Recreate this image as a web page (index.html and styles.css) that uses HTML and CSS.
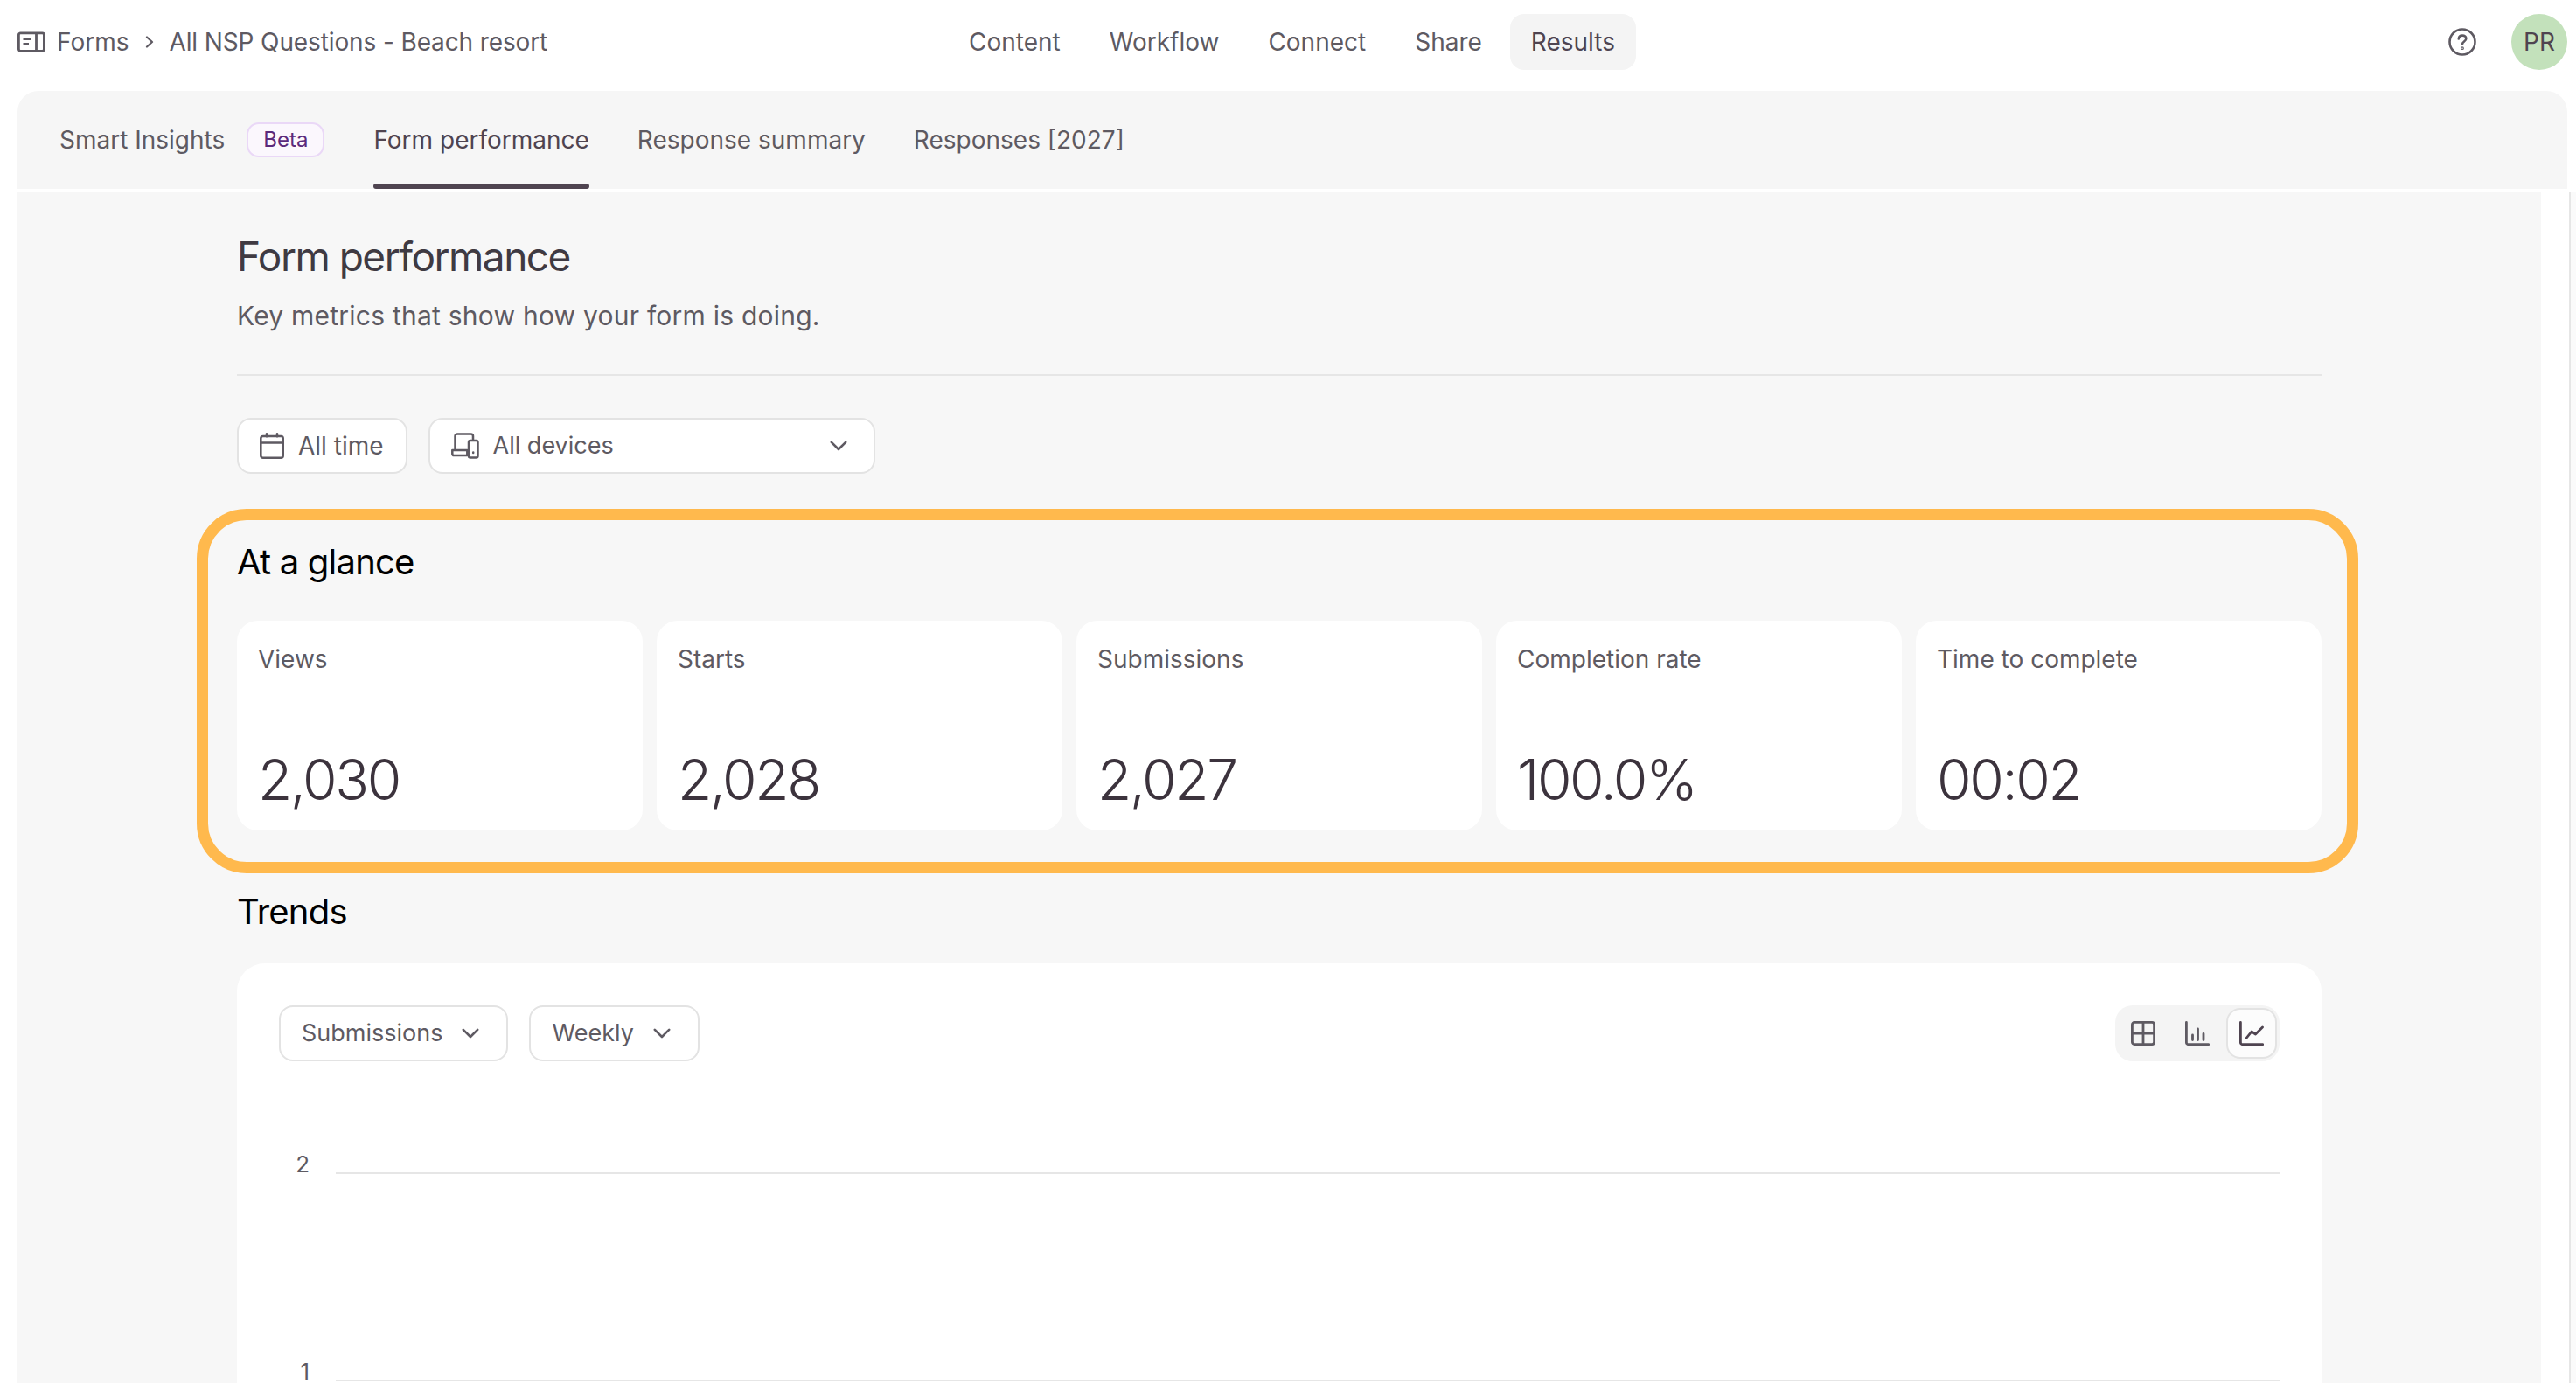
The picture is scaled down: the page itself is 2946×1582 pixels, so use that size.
FILE: index.html
```html
<!DOCTYPE html>
<html lang="en">
<head>
<meta charset="utf-8">
<title>Form performance</title>
<link rel="stylesheet" href="styles.css">
</head>
<body>
<header class="topbar">
  <div class="crumbs">
    <svg class="crumb-icon" width="32" height="24" viewBox="0 0 32 24" fill="none" stroke="currentColor" stroke-width="2.8"><rect x="1.400" y="1.800" width="29" height="20.500" rx="2"/><path d="M21.500 2v20M6.500 8.500h9.500M6.500 14.500h6.500"/></svg>
    <span>Forms</span>
    <svg class="crumb-sep" width="10" height="14" viewBox="0 0 10 14" fill="none" stroke="currentColor" stroke-width="2.200" stroke-linecap="round" stroke-linejoin="round"><path d="M2 1.500 8 7l-6 5.500"/></svg>
    <span class="crumb-title">All NSP Questions - Beach resort</span>
  </div>
  <nav class="mainnav">
    <a class="navitem">Content</a>
    <a class="navitem">Workflow</a>
    <a class="navitem">Connect</a>
    <a class="navitem">Share</a>
    <a class="navitem navitem-active">Results</a>
  </nav>
  <div class="account">
    <svg width="32" height="32" viewBox="0 0 32 32" fill="none" stroke="currentColor" stroke-width="2.600" stroke-linecap="round"><circle cx="16" cy="16" r="14.500"/><path d="M11.800 12.500c.2-2.400 2-3.900 4.300-3.900 2.400 0 4.200 1.500 4.200 3.600 0 3.200-4.300 3.300-4.300 6.200"/><circle cx="16" cy="23.200" r=".6"/></svg>
    <div class="avatar">PR</div>
  </div>
</header>

<div class="tabbar">
  <a class="tab">Smart Insights<span class="beta">Beta</span></a>
  <a class="tab tab-active">Form performance</a>
  <a class="tab">Response summary</a>
  <a class="tab">Responses [2027]</a>
</div>

<div class="shell">
  <main class="panel">
    <div class="inner">
      <h1 class="title">Form performance</h1>
      <p class="subtitle">Key metrics that show how your form is doing.</p>
      <hr class="divider">
      <div class="filters">
        <button class="control control-time">
          <svg width="28" height="30" viewBox="0 0 28 30" fill="none" stroke="currentColor" stroke-width="2.600" stroke-linecap="round"><rect x="1.300" y="4" width="25.400" height="24.700" rx="2.500"/><path d="M1.300 11.500h25.400M8 1.300v3M20 1.300v3"/></svg>
          All time
        </button>
        <button class="control control-wide">
          <svg width="32" height="30" viewBox="0 0 32 30" fill="none" stroke="currentColor" stroke-width="2.500" stroke-linecap="round" stroke-linejoin="round"><path d="M4.500 20V4a2.500 2.500 0 0 1 2.500-2.500h15.500A2.500 2.500 0 0 1 25 4v4M1.300 20h17v6H3a1.700 1.700 0 0 1-1.700-1.700z"/><rect x="20" y="9" width="10.500" height="19.500" rx="2"/><path d="M25.200 22.500v.5"/></svg>
          <span class="control-label">All devices</span>
          <svg width="20" height="12" viewBox="0 0 20 12" fill="none" stroke="currentColor" stroke-width="2.600" stroke-linecap="round" stroke-linejoin="round"><path d="m1.800 1.800 8.200 8.200 8.200-8.200"/></svg>
        </button>
      </div>

      <section class="glance">
        <div class="highlight"></div>
        <h2 class="heading">At a glance</h2>
        <div class="stats">
          <div class="stat"><div class="stat-label">Views</div><div class="stat-value">2,030</div></div>
          <div class="stat"><div class="stat-label">Starts</div><div class="stat-value">2,028</div></div>
          <div class="stat"><div class="stat-label">Submissions</div><div class="stat-value">2,027</div></div>
          <div class="stat"><div class="stat-label">Completion rate</div><div class="stat-value">100.0%</div></div>
          <div class="stat"><div class="stat-label">Time to complete</div><div class="stat-value">00:02</div></div>
        </div>
      </section>

      <h2 class="heading heading-trends">Trends</h2>
      <section class="chart-card">
        <div class="chart-tools">
          <button class="control control-drop">Submissions
            <svg width="20" height="12" viewBox="0 0 20 12" fill="none" stroke="currentColor" stroke-width="2.600" stroke-linecap="round" stroke-linejoin="round"><path d="m1.800 1.800 8.200 8.200 8.200-8.200"/></svg>
          </button>
          <button class="control control-drop">Weekly
            <svg width="20" height="12" viewBox="0 0 20 12" fill="none" stroke="currentColor" stroke-width="2.600" stroke-linecap="round" stroke-linejoin="round"><path d="m1.800 1.800 8.200 8.200 8.200-8.200"/></svg>
          </button>
          <div class="views">
            <span class="view">
              <svg width="28" height="28" viewBox="0 0 28 28" fill="none" stroke="currentColor" stroke-width="2.800" stroke-linejoin="round"><rect x="1.400" y="1.400" width="25.200" height="25.200" rx="2.500"/><path d="M14 1.400v25.200M1.400 14h25.200"/></svg>
            </span>
            <span class="view">
              <svg width="28" height="28" viewBox="0 0 28 28" fill="none" stroke="currentColor" stroke-width="2.800" stroke-linecap="round" stroke-linejoin="round"><path d="M1.400 1.400v23a2.300 2.300 0 0 0 2.300 2.300h23M8.500 16v5.500M14.500 9v12.500M21 14.500v7"/></svg>
            </span>
            <span class="view view-active">
              <svg width="28" height="28" viewBox="0 0 28 28" fill="none" stroke="currentColor" stroke-width="2.800" stroke-linecap="round" stroke-linejoin="round"><path d="M1.400 1.400v23a2.300 2.300 0 0 0 2.300 2.300h23M8 19.500l6-7.500 4.500 3 8-8"/></svg>
            </span>
          </div>
        </div>
        <div class="plot">
          <div class="plot-row"><span class="tick">2</span><span class="gridline"></span></div>
          <div class="plot-row"><span class="tick">1</span><span class="gridline"></span></div>
        </div>
      </section>
    </div>
  </main>
  <div class="scrolltrack"></div>
</div>
</body>
</html>
```

FILE: styles.css
```css
* { box-sizing: border-box; }
html, body { margin: 0; height: 100%; }
body {
  width: 2946px;
  height: 1582px;
  overflow: hidden;
  background: #fff;
  color: #5e5a62;
  font-family: Inter, "Noto Sans", sans-serif;
  font-size: 28px;
  line-height: 40px;
  display: flex;
  flex-direction: column;
}
.topbar {
  height: 104px;
  flex: none;
  display: grid;
  grid-template-columns: 1fr auto 1fr;
  align-items: start;
  padding: 16px 10px 0 20px;
}
.crumbs { display: flex; align-items: center; height: 64px; }
.crumb-icon { margin-right: 13px; }
.crumb-sep { margin: 0 18px; }
.crumb-title { letter-spacing: -.12px; }
.mainnav { display: flex; gap: 8px; margin-left: -1px; }
.navitem { height: 64px; padding: 0 24px; display: flex; align-items: center; border-radius: 16px; }
.navitem-active { background: #f4f4f4; color: #4f4450; }
.account { display: flex; justify-content: flex-end; align-items: center; gap: 40px; }
.avatar {
  width: 64px; height: 64px; border-radius: 50%;
  background: #c3e1bb; color: #4f4450;
  display: flex; align-items: center; justify-content: center;
}
.tabbar {
  flex: none;
  height: 112px;
  margin: 0 10px 4px 20px;
  padding-left: 48px;
  background: #f6f6f6;
  border-radius: 24px 24px 0 0;
  display: flex;
  gap: 55px;
}
.tab { height: 112px; display: flex; align-items: center; position: relative; }
.tab-active { color: #4f4450; }
.tab-active::after {
  content: ""; position: absolute; left: 0; right: 0; bottom: 0;
  height: 6px; background: #4f4450; border-radius: 3px;
}
.beta {
  margin: 0 1px 0 25px; height: 40px; padding: 0 17px;
  display: flex; align-items: center;
  background: #fbf7fd; border: 2px solid #ead8f7; border-radius: 14px;
  color: #5b2a7c; font-size: 24px;
}
.shell { flex: 1; min-height: 0; display: flex; padding-left: 20px; }
.panel { width: 2886px; background: #f7f7f7; overflow: hidden; }
.scrolltrack { width: 8px; margin-left: 32px; background: #fafafa; border-left: 2px solid #e6e6e6; }
.inner { width: 2384px; margin-left: 251px; padding-top: 45px; }
.title { margin: 0; font-size: 46px; line-height: 56px; font-weight: 400; letter-spacing: -1.5px; color: #3f3a42; }
.subtitle { margin: 20px 0 0; font-size: 30px; line-height: 40px; letter-spacing: .23px; }
.divider { margin: 47px 0 0; border: 0; height: 2px; background: #e6e6e6; }
.filters { display: flex; gap: 24px; margin-top: 48px; }
.control {
  height: 64px; padding: 0 24px;
  display: flex; align-items: center; gap: 16px;
  background: #fff; border: 2px solid #e3e3e3; border-radius: 16px;
  color: inherit; font-family: inherit; font-size: 27px; line-height: 40px;
}
.control-time { font-size: 28px; padding-right: 25px; }
.control-wide { width: 511px; padding-right: 30px; }
.control-label { flex: 1; text-align: left; }
.control-drop { gap: 22px; padding-right: 31px; }
.glance { position: relative; margin-top: 77px; }
.highlight {
  position: absolute; left: -46px; right: -42px; top: -37px; bottom: -49px;
  border: 13px solid #ffb94d; border-radius: 57px; pointer-events: none;
}
.heading { margin: 0; font-size: 40px; line-height: 48px; font-weight: 400; letter-spacing: -.8px; color: #000; }
.stats { display: grid; grid-template-columns: repeat(5, 1fr); gap: 16px; margin-top: 43px; }
.stat { height: 240px; padding: 24px; background: #fff; border-radius: 24px; }
.stat-label { line-height: 40px; }
.stat-value { margin-top: 78px; font-size: 64px; line-height: 80px; font-weight: 350; letter-spacing: -2.300px; color: #3c333d; }
.heading-trends { margin-top: 69px; }
.chart-card { margin-top: 35px; height: 700px; padding: 48px 48px 0; background: #fff; border-radius: 32px; }
.chart-tools { display: flex; gap: 24px; }
.views {
  margin-left: auto; width: 188px; height: 64px; padding: 3px;
  display: flex; justify-content: flex-end; gap: 4px;
  background: #f4f4f4; border-radius: 20px;
}
.view { width: 58px; display: flex; align-items: center; justify-content: center; border-radius: 16px; }
.view-active { background: #fcfcfc; border: 2px solid #e3e3e3; color: #4f4450; }
.plot { margin-top: 99px; }
.plot-row { height: 237px; display: flex; align-items: flex-start; }
.tick { width: 65px; padding-right: 30px; margin-top: 6px; text-align: right; font-size: 26px; line-height: 26px; }
.gridline { flex: 1; height: 2px; background: #e6e6e6; margin-top: 28px; }
```
